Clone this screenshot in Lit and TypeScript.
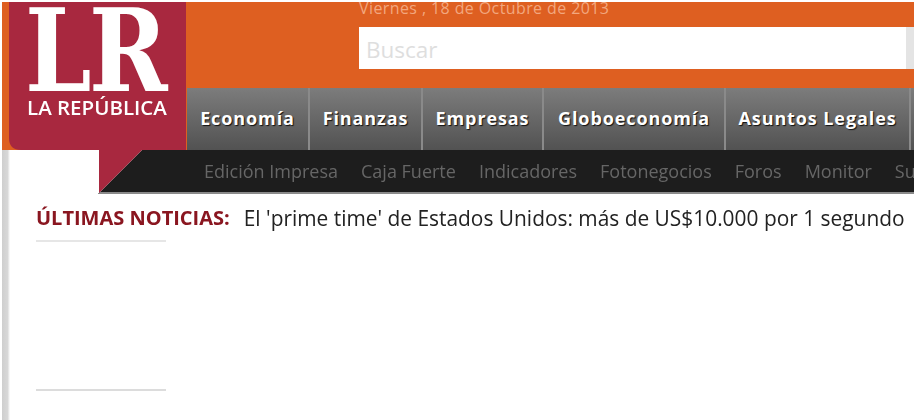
import { LitElement, html, css } from "lit";
import { customElement } from "lit/decorators.js";

const MAIN = [
  ["Economía", 123],
  ["Finanzas", 113],
  ["Empresas", 121],
  ["Globoeconomía", 182],
  ["Asuntos Legales", 185],
];
const SUB = ["Edición Impresa", "Caja Fuerte", "Indicadores", "Fotonegocios", "Foros", "Monitor", "Suscripciones"];

@customElement("app-root")
export class AppRoot extends LitElement {
  static styles = css`
    :host {
      display: block;
      width: 920px;
      height: 420px;
      overflow: hidden;
      background: #fff;
      font-family: "Open Sans", "Noto Sans", sans-serif;
    }
    .page {
      position: relative;
      width: 920px;
      height: 420px;
      overflow: hidden;
      filter: blur(0.6px);
    }
    .header {
      margin: 2px 6px 0 2px;
      width: 912px;
    }
    .top {
      background: #de5f21;
      height: 148px;
      padding-left: 185px;
      box-sizing: border-box;
      display: flex;
      flex-direction: column;
      overflow: hidden;
    }
    .search-area {
      height: 86px;
      padding-left: 172px;
      box-sizing: border-box;
    }
    .date {
      font-size: 16px;
      line-height: 16px;
      height: 25px;
      margin-top: -2px;
      margin-bottom: 2px;
      color: #f2a77f;
      letter-spacing: 0.4px;
      white-space: nowrap;
    }
    .search-row {
      display: flex;
      height: 42px;
    }
    .search {
      width: 547px;
      background: #fff;
      font-size: 22.5px;
      line-height: 46px;
      padding-left: 7px;
      box-sizing: border-box;
      color: #dedede;
    }
    .search-btn {
      flex: 1;
      background: #e4e4e4;
    }
    .nav {
      height: 62px;
      display: flex;
      background: linear-gradient(#7c7c7c, #525252);
    }
    .nav a {
      box-sizing: border-box;
      border-right: 2px solid #8a8a8a;
      flex: none;
      font-size: 18px;
      font-weight: 700;
      color: #fff;
      text-align: center;
      line-height: 60px;
      letter-spacing: 0.9px;
      text-shadow: 1px 1px 1px #111;
      white-space: nowrap;
    }
    .sub {
      height: 44px;
      box-sizing: border-box;
      background: #1d1d1d;
      border-bottom: 2px solid #8a8a8a;
      clip-path: polygon(140px 0, 100% 0, 100% 100%, 96px 100%);
      display: flex;
      gap: 23px;
      padding-left: 202px;
      font-size: 18px;
      line-height: 42px;
      color: #666;
      white-space: nowrap;
      overflow: hidden;
    }
    .rail {
      position: absolute;
      left: 2px;
      top: 150px;
      bottom: 0;
      width: 8px;
      background: linear-gradient(90deg, #cfcfcf, #d8d8d8 70%, #fff);
    }
    .logo {
      position: absolute;
      left: 2px;
      top: 2px;
      width: 186px;
      height: 192px;
      color: #fff;
    }
    .logo svg {
      position: absolute;
      inset: 0;
    }
    .lr {
      position: absolute;
      left: 23px;
      top: -17.5px;
      font-family: "DejaVu Serif", "Liberation Serif", serif;
      font-weight: 700;
      font-size: 114px;
      line-height: 132px;
      transform: scaleX(0.83);
      transform-origin: 0 0;
      letter-spacing: -3px;
    }
    .name {
      position: absolute;
      left: 25px;
      top: 92px;
      font-size: 20.5px;
      font-weight: 600;
      line-height: 26px;
      white-space: nowrap;
    }
    .ticker {
      margin: 13px 0 0 36px;
      display: flex;
      gap: 14px;
      font-size: 20.9px;
      line-height: 22px;
      white-space: nowrap;
      color: #222;
    }
    .ticker b {
      font-size: 20px;
      color: #8a1620;
      font-weight: 700;
    }
    .rule {
      margin-left: 36px;
      width: 130px;
      height: 2px;
      background: #e6e6e6;
    }
    .rule.a {
      margin-top: 11px;
    }
    .rule.b {
      margin-top: 147px;
      background: #dcdcdc;
    }
  `;

  render() {
    return html`
      <div class="page">
        <div class="rail"></div>
        <div class="header">
          <div class="top">
            <div class="search-area">
              <div class="date">Viernes , 18 de Octubre de 2013</div>
              <div class="search-row">
                <div class="search">Buscar</div>
                <div class="search-btn"></div>
              </div>
            </div>
            <div class="nav">
              ${MAIN.map(([t, w]) => html`<a style="width:${w}px">${t}</a>`)}
            </div>
          </div>
          <div class="sub">${SUB.map((s) => html`<span>${s}</span>`)}</div>
        </div>
        <div class="ticker">
          <b>ÚLTIMAS NOTICIAS:</b>
          <span>El 'prime time' de Estados Unidos: más de US$10.000 por 1 segundo</span>
        </div>
        <div class="rule a"></div>
        <div class="rule b"></div>
        <div class="logo">
          <svg width="186" height="192" viewBox="0 0 186 192">
            <path d="M7 0H184V148H140L97 191V148H19Q7 148 7 136Z" fill="#a8283f" />
          </svg>
          <div class="lr">LR</div>
          <div class="name">LA REPÚBLICA</div>
        </div>
      </div>
    `;
  }
}
